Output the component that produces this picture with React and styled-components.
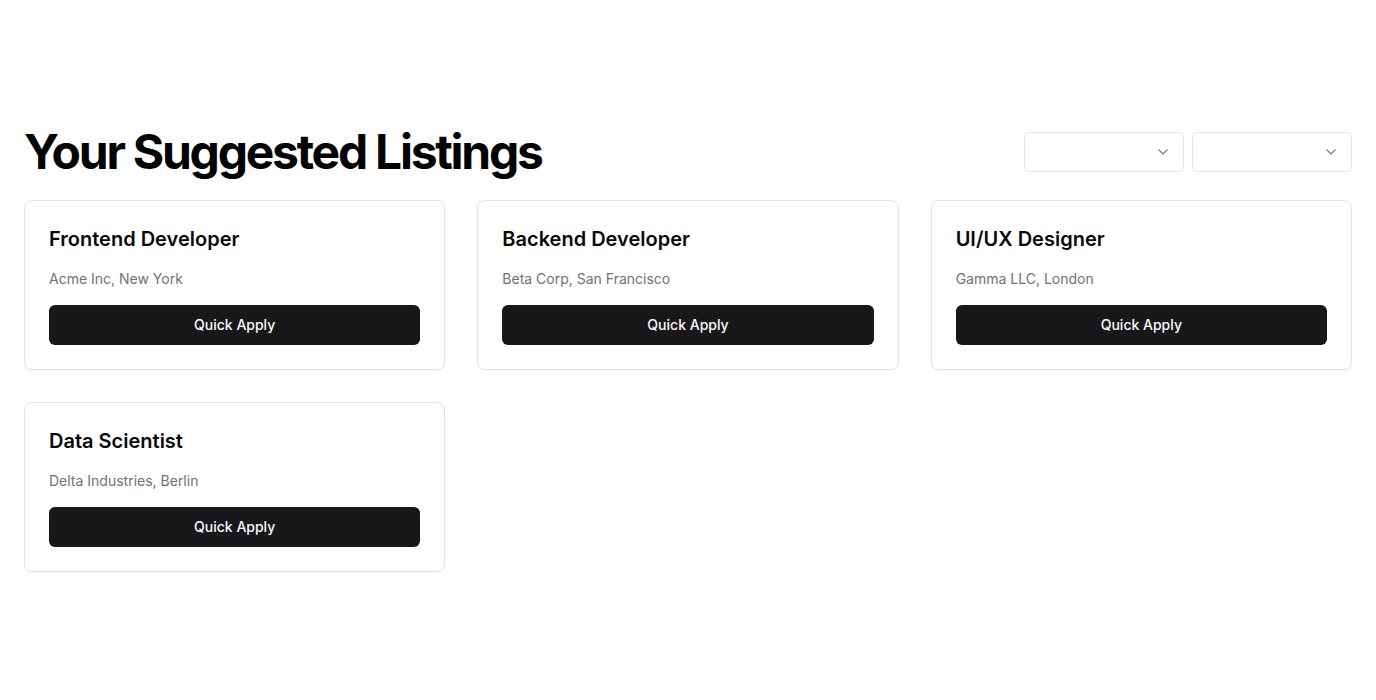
import React from 'react'
import styled, { createGlobalStyle } from 'styled-components'

const GlobalStyle = createGlobalStyle`
  * { box-sizing: border-box; }
  body {
    margin: 0;
    background: #ffffff;
    font-family: Inter, "Noto Sans", sans-serif;
    color: #09090b;
  }
`

const listings = [
  { title: 'Frontend Developer', place: 'Acme Inc, New York' },
  { title: 'Backend Developer', place: 'Beta Corp, San Francisco' },
  { title: 'UI/UX Designer', place: 'Gamma LLC, London' },
  { title: 'Data Scientist', place: 'Delta Industries, Berlin' },
]

const Chevron = () => (
  <svg width="16" height="16" viewBox="0 0 24 24" fill="none" stroke="currentColor"
    strokeWidth="2" strokeLinecap="round" strokeLinejoin="round">
    <path d="m6 9 6 6 6-6" />
  </svg>
)

export default function App() {
  return (
    <>
      <GlobalStyle />
      <Section>
        <Header>
          <Heading>Your Suggested Listings</Heading>
          <Filters>
            <Select type="button"><span /><Chevron /></Select>
            <Select type="button"><span /><Chevron /></Select>
          </Filters>
        </Header>
        <Grid>
          {listings.map((l) => (
            <Card key={l.title}>
              <CardTitle>{l.title}</CardTitle>
              <Place>{l.place}</Place>
              <ApplyButton type="button">Quick Apply</ApplyButton>
            </Card>
          ))}
        </Grid>
      </Section>
    </>
  )
}

const Section = styled.section`
  padding: 128px 24px 48px;
`

const Header = styled.div`
  display: flex;
  align-items: center;
  justify-content: space-between;
  margin-bottom: 24px;
`

const Heading = styled.h1`
  margin: 0;
  font-size: 48px;
  line-height: 48px;
  font-weight: 700;
  letter-spacing: -0.047em;
  color: #030303;
`

const Filters = styled.div`
  display: flex;
  gap: 8px;
`

const Select = styled.button`
  display: flex;
  align-items: center;
  justify-content: space-between;
  width: 160px;
  height: 40px;
  padding: 0 12px;
  border: 1px solid #e4e4e7;
  border-radius: 6px;
  background: #ffffff;
  color: #09090b;
  font-family: inherit;
  font-size: 14px;
  cursor: pointer;

  & svg {
    opacity: 0.5;
  }
`

const Grid = styled.div`
  display: grid;
  grid-template-columns: repeat(3, 1fr);
  gap: 32px;
`

const Card = styled.div`
  display: flex;
  flex-direction: column;
  padding: 24px;
  border: 1px solid #e4e4e7;
  border-radius: 8px;
  background: #ffffff;
  box-shadow: 0 1px 2px rgba(0, 0, 0, 0.05);
`

const CardTitle = styled.h3`
  margin: 0;
  font-size: 20px;
  line-height: 28px;
  font-weight: 600;
  color: #09090b;
`

const Place = styled.p`
  margin: 16px 0 0;
  font-size: 14px;
  line-height: 20px;
  color: #71717a;
`

const ApplyButton = styled.button`
  margin-top: 16px;
  height: 40px;
  width: 100%;
  padding: 0 0 2px;
  border: none;
  border-radius: 6px;
  background: #18181b;
  color: #fafafa;
  font-family: inherit;
  font-size: 14px;
  font-weight: 500;
  cursor: pointer;
`
